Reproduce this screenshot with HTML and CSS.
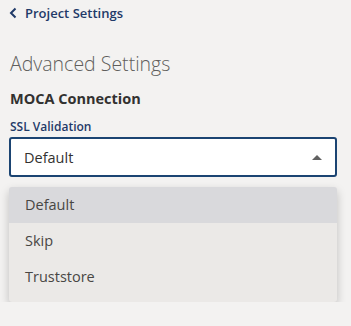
FILE: index.html
```html
<!DOCTYPE html>
<html>
  <head>
    <meta charset="UTF-8">
    <title>Advanced Settings</title>
    <link rel="stylesheet" href="styles.css">
  </head>
  <body>
    <div class="page">
      <a class="back" href="#">
        <svg width="8" height="12" viewBox="0 0 8 12"><path d="M6.5 1.5 L2 6 L6.5 10.5" fill="none" stroke="#1f3a68" stroke-width="2"/></svg>
        <span>Project Settings</span>
      </a>
      <h1>Advanced Settings</h1>
      <h2>MOCA Connection</h2>
      <label class="field-label">SSL Validation</label>
      <div class="select">
        <span>Default</span>
        <span class="caret"></span>
      </div>
      <ul class="menu">
        <li class="active">Default</li>
        <li>Skip</li>
        <li>Truststore</li>
      </ul>
    </div>
  </body>
</html>
```

FILE: styles.css
```css
body {
  margin: 0;
  background-color: #f3f2f1;
  font-family: "Open Sans", "Noto Sans", sans-serif;
  color: #323130;
}

.page {
  display: flex;
  flex-direction: column;
  padding: 4px 14px 0 9px;
}

.back {
  display: flex;
  align-items: center;
  gap: 8px;
  text-decoration: none;
  color: #1f3a68;
  font-size: 13px;
  font-weight: 600;
  height: 18px;
}

h1 {
  margin: 28px 0 0 1px;
  font-size: 19.5px;
  font-weight: 300;
  color: #605e5c;
  line-height: 27px;
}

h2 {
  margin: 12px 0 0 1px;
  font-size: 14.5px;
  font-weight: 700;
  line-height: 20px;
}

.field-label {
  margin: 9px 0 0 1px;
  font-size: 12px;
  font-weight: 600;
  color: #1f3a68;
  line-height: 17px;
}

.select {
  margin-top: 2px;
  height: 36px;
  border: 2px solid #1b4472;
  border-radius: 3px;
  background: #fff;
  display: flex;
  align-items: center;
  justify-content: space-between;
  padding: 0 13px 0 13px;
  font-size: 14.5px;
}

.caret {
  width: 0;
  height: 0;
  border-left: 5px solid transparent;
  border-right: 5px solid transparent;
  border-bottom: 5px solid #616161;
}

.menu {
  list-style: none;
  margin: 10px 0 0 0;
  padding: 0 0 7px 0;
  background: #ebe9e7;
  border-radius: 3px;
  box-shadow: 0 4px 10px rgba(0, 0, 0, 0.22);
  font-size: 14.5px;
  color: #484644;
}

.menu li {
  height: 36px;
  line-height: 36px;
  padding-left: 16px;
}

.menu li.active {
  background: #d9d9dc;
  border-radius: 3px 3px 0 0;
}
```
